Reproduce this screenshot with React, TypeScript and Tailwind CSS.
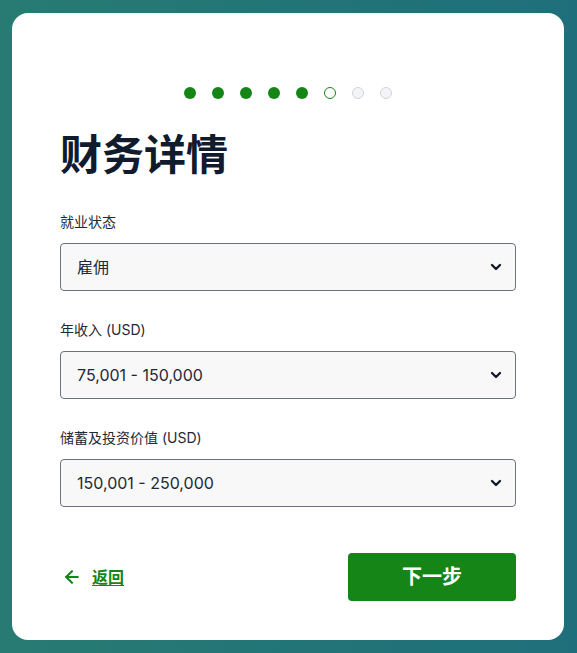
import React, { useState } from 'react';
import { ArrowLeft, ChevronDown } from 'lucide-react';

const font = { fontFamily: 'Inter, "Noto Sans CJK SC", sans-serif' };

const steps = [true, true, true, true, true, false, false, false];

function Field({ label, value, options }: { label: string; value: string; options: string[] }) {
  const [v, setV] = useState(value);
  return (
    <div className="flex flex-col">
      <label className="text-sm leading-5 text-[#1f2937] mb-[11px]">{label}</label>
      <div className="relative">
        <select
          value={v}
          onChange={(e) => setV(e.target.value)}
          className="w-full h-12 appearance-none rounded-[4px] border border-[#6b7280] bg-[#f8f8f8] pl-4 pr-10 text-base text-[#1f2937] outline-none"
        >
          {options.map((o) => (
            <option key={o}>{o}</option>
          ))}
        </select>
        <ChevronDown
          className="pointer-events-none absolute right-[12px] top-1/2 -translate-y-1/2 h-4 w-4 text-[#111827]"
          strokeWidth={3.5}
        />
      </div>
    </div>
  );
}

export default function App() {
  return (
    <div
      className="min-h-screen w-full bg-gradient-to-r from-[#277b72] to-[#1e6f7b] px-3 py-[13px]"
      style={font}
    >
      <div className="bg-white rounded-2xl h-[627px] w-[552px] px-12 pt-[74px]">
        <div className="flex justify-center gap-4">
          {steps.map((done, i) =>
            done ? (
              <span key={i} className="h-3 w-3 rounded-full bg-[#158518]" />
            ) : i === 5 ? (
              <span key={i} className="h-3 w-3 rounded-full border border-[#158518] bg-white" />
            ) : (
              <span key={i} className="h-3 w-3 rounded-full border border-[#d1d5db] bg-[#f3f4f6]" />
            )
          )}
        </div>

        <h1 className="mt-[28px] text-[42px] leading-[56px] font-bold text-[#111b2e]">财务详情</h1>

        <div className="mt-[29px] flex flex-col gap-[29px]">
          <Field label="就业状态" value="雇佣" options={['雇佣', '自雇', '退休', '学生', '无业']} />
          <Field
            label="年收入 (USD)"
            value="75,001 - 150,000"
            options={['0 - 25,000', '25,001 - 75,000', '75,001 - 150,000', '150,001+']}
          />
          <Field
            label="储蓄及投资价值 (USD)"
            value="150,001 - 250,000"
            options={['0 - 50,000', '50,001 - 150,000', '150,001 - 250,000', '250,001+']}
          />
        </div>

        <div className="mt-[46px] flex items-center justify-between">
          <a href="#" className="flex items-center gap-[10px] pl-[2px] text-[#158518] font-bold text-base">
            <ArrowLeft className="h-5 w-5" strokeWidth={2.5} />
            <span className="underline underline-offset-2">返回</span>
          </a>
          <button className="h-12 w-[168px] rounded-[4px] bg-[#158518] text-white text-xl font-bold">
            下一步
          </button>
        </div>
      </div>
    </div>
  );
}
